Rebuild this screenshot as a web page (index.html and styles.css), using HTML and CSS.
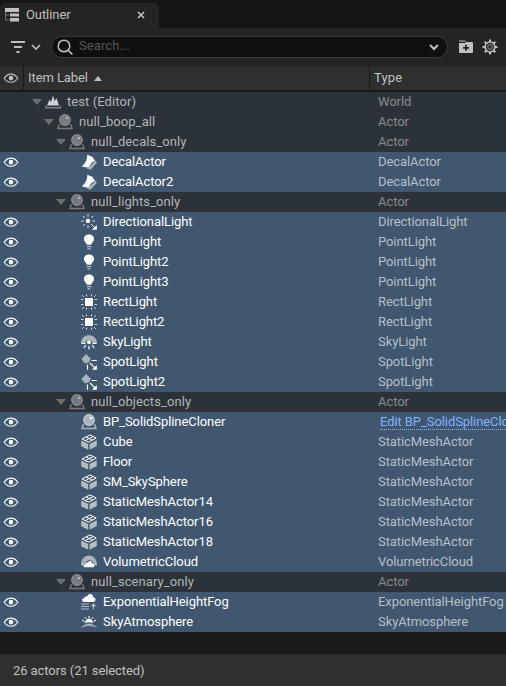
FILE: index.html
```html
<!DOCTYPE html>
<html lang="en">
<head>
<meta charset="utf-8">
<title>Outliner</title>
<link rel="stylesheet" href="styles.css">
</head>
<body>
<svg class="defs" width="0" height="0">
  <symbol id="eye" viewBox="0 0 16 12"><path d="M1.2 6.2C4.6 .8 11.4 .8 14.8 6.2C11.4 11.5 4.6 11.5 1.2 6.2Z" fill="none" stroke="currentColor" stroke-width="1.1"/><circle cx="8" cy="6.1" r="2.3" fill="currentColor"/></symbol>
  <symbol id="world" viewBox="0 0 16 16"><path d="M2 11.5L4.5 5.5L6 8L8 1.5L9.7 7L11.5 4L14 11.5Z" fill="currentColor"/><path d="M.5 11.5V13.7H15.5V11.5" fill="none" stroke="currentColor" stroke-width="1.5" opacity=".5"/></symbol>
  <symbol id="actor" viewBox="0 0 16 16"><circle cx="8" cy="6" r="5.9" fill="currentColor" opacity=".55"/><circle cx="8" cy="6" r="5.3" fill="none" stroke="currentColor" stroke-width="1" opacity=".4"/><circle cx="10" cy="4" r="1.3" fill="currentColor"/><path d="M2.4 10.2L1 14.5H15L13.6 10.2" fill="none" stroke="currentColor" stroke-width="1.5" opacity=".55"/></symbol>
  <symbol id="decal" viewBox="0 0 16 16"><path d="M14.3 6.8L16 8.8L9.5 15.7L4.3 13.7L8.3 13Z" fill="currentColor" opacity=".55"/><path d="M6.3 .8L11.7 3Q12.2 5.5 14.3 6.8Q9.5 8.5 8.3 13Q4 14 .8 12.2Q6.5 8 6.3 .8Z" fill="currentColor"/></symbol>
  <symbol id="directional" viewBox="0 0 16 16"><circle cx="7" cy="7" r="2.2" fill="currentColor"/><path d="M7 .3V2.7M7 11.3V14M0 7H2.7M11.3 7H13.7M2 2L3.8 3.8M12 2L10.2 3.8M2 12L3.8 10.2M10 10L14 14" stroke="currentColor" stroke-width="1" opacity=".85"/><path d="M15.8 11V15.8H11Z" fill="currentColor"/></symbol>
  <symbol id="point" viewBox="0 0 16 16"><path d="M5.7 10.8C5.7 8.5 3 8 3 4.9C3-1 13-1 13 4.9C13 8 10.3 8.5 10.3 10.8Z" fill="currentColor"/><path d="M5.8 12.6H10.2M6.5 14.8H9.5" stroke="currentColor" stroke-width="1.2" opacity=".6"/></symbol>
  <symbol id="rect" viewBox="0 0 16 16"><path d="M4 4H12V12H4Z" fill="currentColor"/><path d="M5.5 .4V2.4M10.5 .4V2.4M5.5 13.6V15.6M10.5 13.6V15.6M0 5.5H2.4M0 10.5H2.4M13.6 5.5H16M13.6 10.5H16M1.2 1.2L2.9 2.9M14.8 1.2L13.1 2.9M1.2 14.8L2.9 13.1M14.8 14.8L13.1 13.1" stroke="currentColor" stroke-width="1" opacity=".8"/></symbol>
  <symbol id="sky" viewBox="0 0 16 16"><path d="M0 9C.3-1.5 15.7-1.5 16 9H11.5C11 5 5 5 4.5 9Z" fill="currentColor" opacity=".55"/><circle cx="8" cy="8.2" r="2" fill="currentColor"/><path d="M.4 9.5H4.5M11.5 9.5H15.6M8 12V15.5M5 11L2.8 14M11 11L13.2 14" stroke="currentColor" stroke-width="1.2"/></symbol>
  <symbol id="spot" viewBox="0 0 16 16"><path d="M5 0L9.7 4.4L8 8.2L4 9.4L.5 5Z" fill="currentColor" opacity=".55"/><path d="M10.5 6.5H15.8M6.5 10.5V15.8M9 9L14 14" stroke="currentColor" stroke-width="1.2"/><path d="M15.8 11V15.8H11Z" fill="currentColor"/></symbol>
  <symbol id="mesh" viewBox="0 0 16 16"><path d="M.2 6.5L7.2 9.9V15.8L.2 12.2ZM8.6 9.9L15.8 6.3V12L8.6 15.8Z" fill="currentColor" opacity=".6"/><path d="M1 5L9 .9L15.2 4L7.6 8.2ZM5 2.9L11.4 6.1M12.2 2.5L4.3 6.6" fill="none" stroke="currentColor" stroke-width="1"/></symbol>
  <symbol id="cloud" viewBox="0 0 16 16"><path d="M0 11.5C-.5-1.8 16.5-1.8 16 11.5H13.5L11 7L8 6L5 8L2.5 11.5Z" fill="currentColor" opacity=".55"/><path d="M4 13.3C2 13.3 2 10.4 4.2 10.2C4.5 8 6 8.3 6.7 8.7C8 5.8 11.3 7 11 9.5C13.8 9.3 14 13.3 12 13.3Z" fill="currentColor"/></symbol>
  <symbol id="fog" viewBox="0 0 16 16"><path d="M3 7.9C.2 7.9.5 3.8 3.3 4.3C3.7 2.3 5 1.9 6.2 2.5C7.5-1.5 12.5-.5 12 3.2C15.3 3 15.3 7.9 12.5 7.9Z" fill="currentColor"/><path d="M0 10H8M0 12.5H8M0 15H8M12.5 15.6V11" stroke="currentColor" stroke-width="1.1" opacity=".6"/><path d="M9.7 12.3L12.5 9.2L15.3 12.3Z" fill="currentColor" opacity=".6"/></symbol>
  <symbol id="atmosphere" viewBox="0 0 16 16"><path d="M4 9.2C4.5 3.2 11.5 3.2 12 9.2Q8 7.3 4 9.2Z" fill="currentColor"/><path d="M8 2V4.5M4 3.2L5.3 5.2M12 3.2L10.7 5.2M1 6L3.7 7.5M15 6L12.3 7.5" stroke="currentColor" stroke-width="1"/><path d="M.5 13.3Q8 6.5 15.5 13.3Q8 9.8 .5 13.3Z" fill="currentColor" stroke="currentColor" stroke-width=".5" opacity=".6"/></symbol>
</svg>
<main class="outliner">
  <div class="tabs">
    <div class="tab">
      <svg class="tab-icon" viewBox="0 0 16 16"><path d="M1 1H15V5H1ZM6 6.5H15V9.5H6ZM6 11H15V14.5H6Z" fill="currentColor"/><path d="M1.5 5V13H5M1.5 8H5" fill="none" stroke="currentColor" opacity=".5"/></svg>
      <span>Outliner</span>
      <svg class="close" viewBox="0 0 8 8"><path d="M1 1L7 7M7 1L1 7" stroke="currentColor" stroke-width="1.7"/></svg>
    </div>
  </div>
  <div class="toolbar">
    <svg class="filter" viewBox="0 0 32 16"><path d="M1 3H15M4 8H12M6.5 13H9.5" stroke="currentColor" stroke-width="1.8"/><path d="M22 6L26 10L30 6" fill="none" stroke="currentColor" stroke-width="1.7"/></svg>
    <div class="search">
      <svg class="lens" viewBox="0 0 16 16"><circle cx="7" cy="7" r="5.8" fill="none" stroke="currentColor" stroke-width="1.5"/><path d="M11 11L15.3 15.3" stroke="currentColor" stroke-width="1.7"/></svg>
      <span class="placeholder">Search...</span>
      <svg class="chevron" viewBox="0 0 10 8"><path d="M1 2L5 6L9 2" fill="none" stroke="currentColor" stroke-width="2"/></svg>
    </div>
    <svg class="folder" viewBox="0 0 16 16"><path d="M1 2.6V1.5H7L8.5 3H14Q15 3 15 4V13Q15 14 14 14H2Q1 14 1 13V4H8L7 2.6Z" fill="currentColor"/><path d="M8 5.8V11.8M5 8.8H11" stroke="#242424" stroke-width="1.7"/></svg>
    <svg class="gear" viewBox="0 0 16 16"><circle cx="8" cy="8" r="4.9" fill="none" stroke="currentColor" stroke-width="1.5"/><circle cx="8" cy="8" r="2.3" fill="none" stroke="currentColor" stroke-width="1.3" opacity=".55"/><path d="M8 .5V3M8 13V15.5M.5 8H3M13 8H15.5M2.7 2.7L4.4 4.4M11.6 11.6L13.3 13.3M13.3 2.7L11.6 4.4M4.4 11.6L2.7 13.3" stroke="currentColor" stroke-width="2"/></svg>
  </div>
  <div class="header">
    <div class="head-eye"><svg class="eye"><use href="#eye"/></svg></div>
    <div class="head-label">Item Label<i class="sort"></i></div>
    <div class="head-type">Type</div>
  </div>
  <div class="tree">
    <div class="row group l0"><span></span><div class="label"><i class="arrow"></i><svg class="icon world"><use href="#world"/></svg>test (Editor)</div><div class="type">World</div></div>
    <div class="row group l1"><span></span><div class="label"><i class="arrow"></i><svg class="icon"><use href="#actor"/></svg>null_boop_all</div><div class="type">Actor</div></div>
    <div class="row group l2"><span></span><div class="label"><i class="arrow"></i><svg class="icon"><use href="#actor"/></svg>null_decals_only</div><div class="type">Actor</div></div>
    <div class="row"><svg class="eye"><use href="#eye"/></svg><div class="label"><svg class="icon"><use href="#decal"/></svg>DecalActor</div><div class="type">DecalActor</div></div>
    <div class="row"><svg class="eye"><use href="#eye"/></svg><div class="label"><svg class="icon"><use href="#decal"/></svg>DecalActor2</div><div class="type">DecalActor</div></div>
    <div class="row group l2"><span></span><div class="label"><i class="arrow"></i><svg class="icon"><use href="#actor"/></svg>null_lights_only</div><div class="type">Actor</div></div>
    <div class="row"><svg class="eye"><use href="#eye"/></svg><div class="label"><svg class="icon"><use href="#directional"/></svg>DirectionalLight</div><div class="type">DirectionalLight</div></div>
    <div class="row"><svg class="eye"><use href="#eye"/></svg><div class="label"><svg class="icon"><use href="#point"/></svg>PointLight</div><div class="type">PointLight</div></div>
    <div class="row"><svg class="eye"><use href="#eye"/></svg><div class="label"><svg class="icon"><use href="#point"/></svg>PointLight2</div><div class="type">PointLight</div></div>
    <div class="row"><svg class="eye"><use href="#eye"/></svg><div class="label"><svg class="icon"><use href="#point"/></svg>PointLight3</div><div class="type">PointLight</div></div>
    <div class="row"><svg class="eye"><use href="#eye"/></svg><div class="label"><svg class="icon"><use href="#rect"/></svg>RectLight</div><div class="type">RectLight</div></div>
    <div class="row"><svg class="eye"><use href="#eye"/></svg><div class="label"><svg class="icon"><use href="#rect"/></svg>RectLight2</div><div class="type">RectLight</div></div>
    <div class="row"><svg class="eye"><use href="#eye"/></svg><div class="label"><svg class="icon"><use href="#sky"/></svg>SkyLight</div><div class="type">SkyLight</div></div>
    <div class="row"><svg class="eye"><use href="#eye"/></svg><div class="label"><svg class="icon"><use href="#spot"/></svg>SpotLight</div><div class="type">SpotLight</div></div>
    <div class="row"><svg class="eye"><use href="#eye"/></svg><div class="label"><svg class="icon"><use href="#spot"/></svg>SpotLight2</div><div class="type">SpotLight</div></div>
    <div class="row group l2"><span></span><div class="label"><i class="arrow"></i><svg class="icon"><use href="#actor"/></svg>null_objects_only</div><div class="type">Actor</div></div>
    <div class="row"><svg class="eye"><use href="#eye"/></svg><div class="label"><svg class="icon"><use href="#actor"/></svg>BP_SolidSplineCloner</div><div class="type"><span class="link">Edit BP_SolidSplineCloner</span></div></div>
    <div class="row"><svg class="eye"><use href="#eye"/></svg><div class="label"><svg class="icon"><use href="#mesh"/></svg>Cube</div><div class="type">StaticMeshActor</div></div>
    <div class="row"><svg class="eye"><use href="#eye"/></svg><div class="label"><svg class="icon"><use href="#mesh"/></svg>Floor</div><div class="type">StaticMeshActor</div></div>
    <div class="row"><svg class="eye"><use href="#eye"/></svg><div class="label"><svg class="icon"><use href="#mesh"/></svg>SM_SkySphere</div><div class="type">StaticMeshActor</div></div>
    <div class="row"><svg class="eye"><use href="#eye"/></svg><div class="label"><svg class="icon"><use href="#mesh"/></svg>StaticMeshActor14</div><div class="type">StaticMeshActor</div></div>
    <div class="row"><svg class="eye"><use href="#eye"/></svg><div class="label"><svg class="icon"><use href="#mesh"/></svg>StaticMeshActor16</div><div class="type">StaticMeshActor</div></div>
    <div class="row"><svg class="eye"><use href="#eye"/></svg><div class="label"><svg class="icon"><use href="#mesh"/></svg>StaticMeshActor18</div><div class="type">StaticMeshActor</div></div>
    <div class="row"><svg class="eye"><use href="#eye"/></svg><div class="label"><svg class="icon"><use href="#cloud"/></svg>VolumetricCloud</div><div class="type">VolumetricCloud</div></div>
    <div class="row group l2"><span></span><div class="label"><i class="arrow"></i><svg class="icon"><use href="#actor"/></svg>null_scenary_only</div><div class="type">Actor</div></div>
    <div class="row"><svg class="eye"><use href="#eye"/></svg><div class="label"><svg class="icon"><use href="#fog"/></svg>ExponentialHeightFog</div><div class="type">ExponentialHeightFog</div></div>
    <div class="row"><svg class="eye"><use href="#eye"/></svg><div class="label"><svg class="icon"><use href="#atmosphere"/></svg>SkyAtmosphere</div><div class="type">SkyAtmosphere</div></div>
  </div>
  <div class="footer">26 actors (21 selected)</div>
</main>
</body>
</html>
```
FILE: styles.css
```css
* { box-sizing: border-box; }
body { margin: 0; background: #1a1a1a; }
svg { display: block; flex: none; }
.defs { position: absolute; }
.outliner {
  display: flex;
  flex-direction: column;
  width: 506px;
  height: 686px;
  overflow: hidden;
  font: 13px/20px Roboto, sans-serif;
  letter-spacing: -.08px;
  color: #c0c0c0;
  white-space: nowrap;
}
.tabs { height: 28px; padding-top: 3px; background: #151515; }
.tab {
  display: flex;
  align-items: center;
  width: 159px;
  height: 25px;
  padding: 0 14px 2px 4px;
  border-radius: 5px 5px 0 0;
  background: #242424;
}
.tab-icon { width: 16px; height: 16px; margin-right: 6px; }
.close { width: 8px; height: 8px; margin-left: auto; }
.toolbar {
  display: flex;
  align-items: center;
  height: 38px;
  padding: 0 8px 0 10px;
  background: #242424;
}
.filter { width: 32px; height: 16px; margin-right: 9px; }
.search {
  display: flex;
  align-items: center;
  width: 397px;
  height: 22px;
  padding: 0 8px 0 5px;
  border: 1px solid #383838;
  border-radius: 11px;
  background: #0f0f0f;
}
.lens { width: 16px; height: 16px; }
.placeholder { margin: -2px 0 0 6px; letter-spacing: .1px; color: #575757; }
.chevron { width: 10px; height: 8px; margin-left: auto; }
.folder { width: 16px; height: 16px; margin-left: 10px; }
.gear { width: 16px; height: 16px; margin-left: 8px; }
.header {
  display: grid;
  grid-template-columns: 24px 346px 1fr;
  height: 26px;
  border-bottom: 2px solid #1a1a1a;
  background: #2f2f2f;
  line-height: 24px;
}
.head-eye, .head-label { border-right: 1px solid #1a1a1a; }
.head-eye { padding-top: 6px; }
.head-label { display: flex; align-items: center; padding-left: 4px; }
.head-type { padding-left: 4px; letter-spacing: .2px; }
.sort {
  margin-left: 6px;
  border: 4px solid transparent;
  border-top: 0;
  border-bottom: 5px solid #c0c0c0;
}
.row {
  display: grid;
  grid-template-columns: 24px 346px 136px;
  height: 20px;
  background: #40576f;
  color: #fff;
}
.eye { width: 16px; height: 12px; margin: 4px 0 0 3px; }
.head-eye .eye { margin-top: 0; }
.label { display: flex; padding-left: 57px; }
.icon { width: 16px; height: 16px; margin: 2px 6px 0 0; }
.type { overflow: hidden; padding-left: 8px; color: #b8bfc7; }
.link {
  display: inline-block;
  height: 18px;
  margin-left: 2px;
  border-bottom: 1px dotted #89b8ff;
  color: #80b3ff;
}
.group { background: #2c323a; color: #b5b5b5; }
.group .label { letter-spacing: .08px; }
.group .type { color: #888a8d; }
.l0 .label { padding-left: 8px; }
.l1 .label { padding-left: 20px; }
.l2 .label { padding-left: 32px; }
.arrow {
  align-self: flex-start;
  margin: 7px 3px 0 0;
  border: 5px solid transparent;
  border-bottom: 0;
  border-top: 6px solid #707070;
}
.world { color: #d0d0d0; }
.footer {
  height: 32px;
  margin-top: auto;
  padding-left: 13px;
  background: #2f2f2f;
  line-height: 33px;
}
```
